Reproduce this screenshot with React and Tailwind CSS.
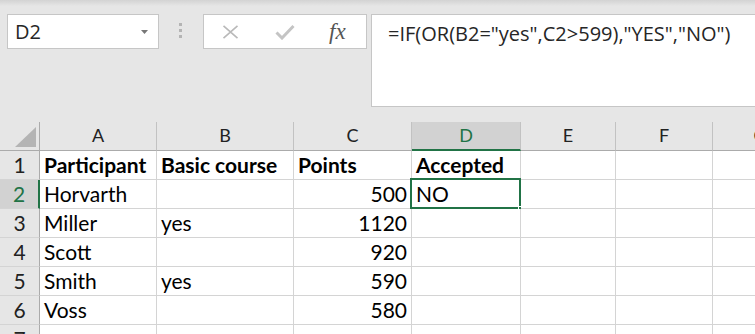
const cols = [
  { key: 'A', w: 'w-[117px]' },
  { key: 'B', w: 'w-[137px]' },
  { key: 'C', w: 'w-[118px]' },
  { key: 'D', w: 'w-[109px]' },
  { key: 'E', w: 'w-[95px]' },
  { key: 'F', w: 'w-[97px]' },
  { key: 'G', w: 'w-[95px]' },
];

const rows = [
  { n: 1, cells: ['Participant', 'Basic course', 'Points', 'Accepted'], bold: true },
  { n: 2, cells: ['Horvarth', '', '500', 'NO'] },
  { n: 3, cells: ['Miller', 'yes', '1120', ''] },
  { n: 4, cells: ['Scott', '', '920', ''] },
  { n: 5, cells: ['Smith', 'yes', '590', ''] },
  { n: 6, cells: ['Voss', '', '580', ''] },
  { n: 7, cells: ['', '', '', ''] },
];

const cellFont = { fontFamily: 'Lato, "Open Sans", sans-serif' };

function FormulaBar() {
  return (
    <div className="flex items-start pt-[8px] h-[116px] shrink-0">
      {/* name box */}
      <div className="ml-[7px] w-[152px] h-[35px] border border-[#c6c6c6] bg-white flex items-center justify-between pl-[7px] pr-[10px]">
        <span className="text-[20px] text-[#262626] leading-none" style={{ fontFamily: '"Open Sans", sans-serif' }}>D2</span>
        <svg width="7" height="4" viewBox="0 0 7 4"><path d="M0 0h7L3.5 4z" fill="#777" /></svg>
      </div>
      {/* dots */}
      <div className="ml-[20px] mt-[9px] flex flex-col gap-[3px]">
        <div className="w-[3px] h-[3px] bg-[#b4b4b4]" />
        <div className="w-[3px] h-[3px] bg-[#b4b4b4]" />
        <div className="w-[3px] h-[3px] bg-[#b4b4b4]" />
      </div>
      {/* cancel / enter / fx */}
      <div className="ml-[21px] w-[164px] h-[35px] border border-[#c6c6c6] bg-white flex items-center">
        <svg className="ml-[18px]" width="17" height="14" viewBox="0 0 17 14">
          <path d="M1.5 0.8L15.5 13.2M15.5 0.8L1.5 13.2" stroke="#b9b9b9" strokeWidth="1.6" />
        </svg>
        <svg className="ml-[36px]" width="20" height="16" viewBox="0 0 20 16">
          <path d="M1.5 8.5L7 14L18.5 2" stroke="#c4c4c4" strokeWidth="3" fill="none" />
        </svg>
        <span className="ml-[34px] text-[23px] italic text-[#555] leading-none" style={{ fontFamily: '"Liberation Serif", serif' }}>fx</span>
      </div>
      {/* formula */}
      <div className="ml-[4px] flex-1 h-[93px] border border-r-0 border-[#c6c6c6] bg-white pl-[16px] pt-[4px]">
        <span className="text-[20px] text-[#262626] whitespace-nowrap" style={{ fontFamily: '"Open Sans", sans-serif' }}>
          =IF(OR(B2="yes",C2&gt;599),"YES","NO")
        </span>
      </div>
    </div>
  );
}

function HeaderRow() {
  return (
    <div className="flex h-[29px] shrink-0">
      <div className="w-[40px] shrink-0 border-r border-b border-[#ababab] relative">
        <svg className="absolute left-[15px] top-[5px]" width="21" height="20" viewBox="0 0 21 20">
          <path d="M21 0V20H0z" fill="#b4b4b4" />
        </svg>
      </div>
      {cols.map((c) => {
        const sel = c.key === 'D';
        return (
          <div
            key={c.key}
            className={`${c.w} shrink-0 border-r border-r-[#c2c2c2] text-center text-[18px] leading-[27px] ${
              sel ? 'bg-[#d2d2d2] text-[#217346] border-b-2 border-b-[#217346]' : 'text-[#222] border-b border-b-[#ababab]'
            }`}
            style={cellFont}
          >
            {c.key}
          </div>
        );
      })}
    </div>
  );
}

function Row({ r }) {
  const sel = r.n === 2;
  return (
    <div className="flex h-[29px] shrink-0">
      <div
        className={`w-[40px] shrink-0 border-b border-b-[#d4d4d4] text-center text-[21px] leading-[28px] ${
          sel ? 'bg-[#d2d2d2] text-[#217346] border-r-2 border-r-[#217346]' : 'text-[#222] border-r border-r-[#ababab]'
        }`}
        style={cellFont}
      >
        {r.n}
      </div>
      {cols.map((c, i) => {
        const v = r.cells[i] || '';
        const num = /^\d+$/.test(v);
        const active = sel && c.key === 'D';
        return (
          <div
            key={c.key}
            className={`${c.w} shrink-0 border-r border-b border-[#d4d4d4] bg-white text-[21px] leading-[28px] text-black whitespace-nowrap relative ${
              num ? 'text-right pr-[4px]' : 'pl-[4px]'
            } ${r.bold ? 'font-bold' : ''}`}
            style={cellFont}
          >
            {v}
            {active && (
              <div className="absolute left-[-2px] top-[-2px] right-[-1px] bottom-[-1px] border-2 border-[#217346]">
                <div className="absolute right-[-5px] bottom-[-5px] w-[6px] h-[6px] bg-[#217346] border border-white" />
              </div>
            )}
          </div>
        );
      })}
    </div>
  );
}

export default function App() {
  return (
    <div className="w-[755px] h-[334px] overflow-hidden bg-[#e6e6e6] flex flex-col">
      <div className="h-[6px] shrink-0 bg-gradient-to-b from-[#d3d3d3] to-[#e6e6e6]" />
      <FormulaBar />
      <HeaderRow />
      {rows.map((r) => (
        <Row key={r.n} r={r} />
      ))}
    </div>
  );
}
